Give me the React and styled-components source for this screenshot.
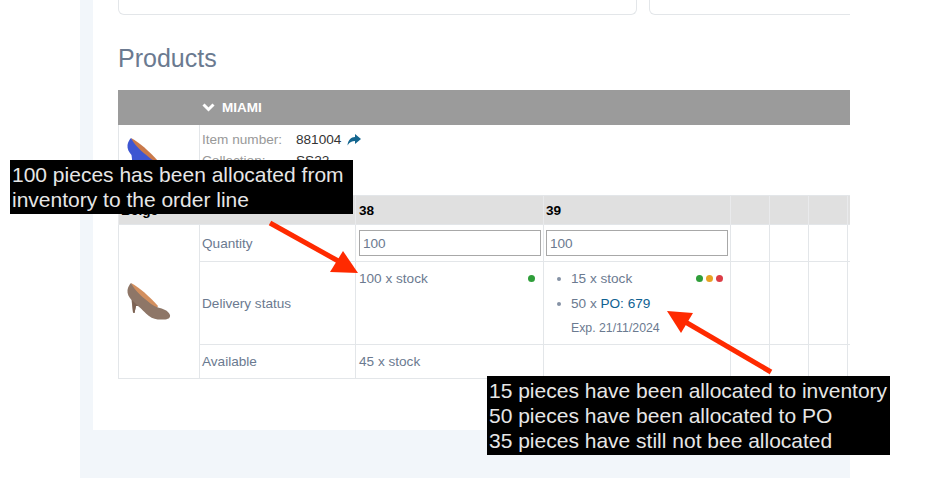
import React from 'react'
import styled, { createGlobalStyle } from 'styled-components'

const GlobalStyle = createGlobalStyle`
    html, body {
        margin: 0;
        padding: 0;
        background: white;
        font-family: "Liberation Sans", Arial, sans-serif;
    }
`

const Page = styled.div`
    position: relative;
    width: 950px;
    height: 479px;
    overflow: hidden;
`

const Shell = styled.div`
    width: 770px;
    height: 478px;
    margin-left: 80px;
    padding: 0 0 48px 13px;
    box-sizing: border-box;
    background: #f2f6fa;
`

const Content = styled.div`
    height: 430px;
    padding-left: 25px;
    background: white;
    overflow: hidden;
`

const CardRow = styled.div`
    display: flex;
    gap: 12px;
    width: 800px;
`

const Card = styled.div`
    flex: 0 0 ${props => props.$width}px;
    height: 15px;
    box-sizing: border-box;
    border: 1px solid #e3e6e9;
    border-top: 0;
    border-radius: 0 0 6px 6px;
`

const Title = styled.h2`
    margin: 29px 0 18px;
    color: #6b7a90;
    font-size: 25px;
    font-weight: 400;
    line-height: 28px;
`

const Table = styled.table`
    width: 735px;
    table-layout: fixed;
    border-collapse: collapse;
    font-size: 13.6px;
    color: #6b7a90;

    td {
        padding: 0 2px;
        border: 1px solid #e3e6e9;
        box-sizing: border-box;
    }
`

const HeaderRow = styled.tr`
    height: 34px;

    td {
        background: #9b9b9b;
        border-color: #9b9b9b;
    }
`

const GroupName = styled.span`
    display: flex;
    align-items: center;
    gap: 7px;
    color: white;
    font-size: 13.5px;
    font-weight: 700;
`

const InfoRow = styled.tr`
    height: 71px;

    td {
        vertical-align: top;
    }
`

const ImageCell = styled.td`
    && {
        vertical-align: middle;
        padding-bottom: ${props => props.$raised ? '6px' : '0'};
    }
`

const InfoLine = styled.div`
    display: flex;
    align-items: center;
    height: 21px;
    margin-top: ${props => props.$first ? '4px' : '0'};
    color: #999;
`

const InfoLabel = styled.span`
    width: 94px;
`

const InfoValue = styled.span`
    color: #333;
    margin-right: 6px;
`

const SizeRow = styled.tr`
    height: 29px;

    td {
        background: #e0e0e0;
        color: black;
        font-weight: 700;
        border-color: #e9eaec;
        border-top: 0;
        border-bottom: 0;
    }
`

const BodyRow = styled.tr`
    height: ${props => props.$height}px;

    td {
        vertical-align: ${props => props.$top ? 'top' : 'middle'};
    }
`

const LabelCell = styled.td`
    && {
        vertical-align: middle;
    }
`

const SizeCell = styled.td`
    && {
        padding-left: 3px;
    }
`

const QtyInput = styled.input`
    display: block;
    width: 100%;
    height: 26px;
    box-sizing: border-box;
    padding: 0 3px;
    border: 1px solid #a8a8a8;
    border-radius: 0;
    background: white;
    color: #6b7a90;
    font: 13.6px "Liberation Sans", Arial, sans-serif;
`

const StatusLine = styled.div`
    display: flex;
    align-items: center;
    justify-content: space-between;
    height: 15px;
    margin-top: 9px;
    padding-right: 6px;
`

const BulletList = styled.ul`
    margin: 9px 0 0;
    padding: 0;
    list-style: none;
`

const BulletItem = styled.li`
    position: relative;
    display: flex;
    align-items: center;
    justify-content: space-between;
    height: 15px;
    margin-bottom: 10px;
    padding: 0 5px 0 25px;

    &::before {
        content: "";
        position: absolute;
        left: 11px;
        top: 6px;
        width: 4px;
        height: 4px;
        border-radius: 50%;
        background: #8592a5;
    }
`

const ExpLine = styled.div`
    margin-top: 4px;
    padding-left: 25px;
    font-size: 12.3px;
`

const PoLink = styled.a`
    color: #0f6292;
    text-decoration: none;
`

const Dots = styled.span`
    display: flex;
    gap: 3px;
`

const Dot = styled.i`
    display: block;
    width: 7px;
    height: 7px;
    border-radius: 50%;
    background: ${props => props.$color};
`

const Note = styled.div`
    position: absolute;
    left: ${props => props.$left}px;
    top: ${props => props.$top}px;
    width: ${props => props.$width}px;
    height: ${props => props.$height}px;
    box-sizing: border-box;
    padding: 2px 2px 0;
    background: black;
    color: #e6e6e6;
    font-size: 21px;
    line-height: 25px;
    white-space: pre-line;
`

const ArrowLayer = styled.svg`
    position: absolute;
    left: 0;
    top: 0;
    pointer-events: none;
`

const ShoeSvg = styled.svg`
    display: block;
    margin-left: 6px;
`

const Shoe = ({ body, lining, heel }) => (
    <ShoeSvg viewBox="0 0 44 40" width="44" height="40">
        <path fill={lining} d="M4 1 C12 5 22 14 31 24 L28 30 L10 18 Z" />
        <path fill={body} d="M4 1 C7 7 13 13 18 17 C22 20.5 26 24 31 25.5 C36 27 41 28 43 33 C43.5 36 41 37.5 37 37.5 C31 38 26 37 22 34 C18 31 14 26 11 24 L9 24 L7.5 31 L6 30.5 C5.5 26 5 22 4.5 18 C2 15 0 12 0.5 8 C1 5 2.5 2.5 4 1 Z" />
        <path fill={heel} d="M5 18 L11 24 L9 24 L7.5 31 L6 30.5 Z" />
    </ShoeSvg>
)

const EmptyCells = () => (
    <>
        <td />
        <td />
        <td />
        <td />
    </>
)

export default function App() {
    return (
        <Page>
            <GlobalStyle />
            <Shell>
                <Content>
                    <CardRow>
                        <Card $width={519} />
                        <Card $width={260} />
                    </CardRow>
                    <Title>Products</Title>
                    <Table>
                        <colgroup>
                            <col width="81" />
                            <col width="156" />
                            <col width="188" />
                            <col width="187" />
                            <col width="39" />
                            <col width="39" />
                            <col width="39" />
                            <col width="6" />
                        </colgroup>
                        <tbody>
                            <HeaderRow>
                                <td />
                                <td colSpan={7}>
                                    <GroupName>
                                        <svg width="13" height="9" viewBox="0 0 13 9">
                                            <path d="M1.5 1.5 L6.5 6.5 L11.5 1.5" fill="none" stroke="white" strokeWidth="3" />
                                        </svg>
                                        MIAMI
                                    </GroupName>
                                </td>
                            </HeaderRow>
                            <InfoRow>
                                <ImageCell $raised>
                                    <Shoe body="#3d56d2" lining="#c9794a" heel="#3d56d2" />
                                </ImageCell>
                                <td colSpan={7}>
                                    <InfoLine $first>
                                        <InfoLabel>Item number:</InfoLabel>
                                        <InfoValue>881004</InfoValue>
                                        <svg width="14" height="12" viewBox="0 0 14 12">
                                            <path fill="#14668f" d="M8 0 L14 5 L8 10 L8 7 C5 7 2.5 8 0.5 11.5 C1 6 4 3 8 3 Z" />
                                        </svg>
                                    </InfoLine>
                                    <InfoLine>
                                        <InfoLabel>Collection:</InfoLabel>
                                        <InfoValue>SS22</InfoValue>
                                    </InfoLine>
                                </td>
                            </InfoRow>
                            <SizeRow>
                                <td colSpan={2}>Beige</td>
                                <SizeCell>38</SizeCell>
                                <td>39</td>
                                <EmptyCells />
                            </SizeRow>
                            <BodyRow $height={37}>
                                <ImageCell rowSpan={3}>
                                    <Shoe body="#8e7667" lining="#d38f5e" heel="#7d6354" />
                                </ImageCell>
                                <td>Quantity</td>
                                <SizeCell><QtyInput defaultValue="100" /></SizeCell>
                                <td><QtyInput defaultValue="100" /></td>
                                <EmptyCells />
                            </BodyRow>
                            <BodyRow $height={83} $top>
                                <LabelCell>Delivery status</LabelCell>
                                <SizeCell>
                                    <StatusLine>
                                        100 x stock
                                        <Dots><Dot $color="#2f9e3a" /></Dots>
                                    </StatusLine>
                                </SizeCell>
                                <td>
                                    <BulletList>
                                        <BulletItem>
                                            15 x stock
                                            <Dots>
                                                <Dot $color="#2f9e3a" />
                                                <Dot $color="#e8a223" />
                                                <Dot $color="#dc3c46" />
                                            </Dots>
                                        </BulletItem>
                                        <BulletItem>
                                            <span>50 x <PoLink href="#">PO: 679</PoLink></span>
                                        </BulletItem>
                                    </BulletList>
                                    <ExpLine>Exp. 21/11/2024</ExpLine>
                                </td>
                                <EmptyCells />
                            </BodyRow>
                            <BodyRow $height={34}>
                                <td>Available</td>
                                <SizeCell>45 x stock</SizeCell>
                                <td />
                                <EmptyCells />
                            </BodyRow>
                        </tbody>
                    </Table>
                </Content>
            </Shell>
            <ArrowLayer width="950" height="479" viewBox="0 0 950 479">
                <path d="M270 223 L340 262" stroke="#ff2a00" strokeWidth="5" fill="none" />
                <path d="M358 273 L330 272 L343 251 Z" fill="#ff2a00" />
                <path d="M771 372 L682 320" stroke="#ff2a00" strokeWidth="5" fill="none" />
                <path d="M667 311 L693 313 L681 333 Z" fill="#ff2a00" />
            </ArrowLayer>
            <Note $left={10} $top={160} $width={343} $height={54}>
                {'100 pieces has been allocated from\ninventory to the order line'}
            </Note>
            <Note $left={487} $top={376} $width={403} $height={79}>
                {'15 pieces have been allocated to inventory\n50 pieces have been allocated to PO\n35 pieces have still not bee allocated'}
            </Note>
        </Page>
    )
}
